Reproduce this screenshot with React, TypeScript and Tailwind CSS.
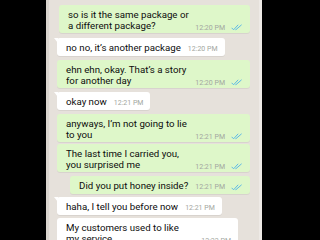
type Msg = {
  out: boolean;
  lines: string[];
  time: string;
  gap: string;
  width: string;
  tail?: boolean;
};

const messages: Msg[] = [
  { out: true, lines: ["so is it the same package or", "a different package?"], time: "12:20 PM", gap: "mt-[5px]", width: "w-[191px]" },
  { out: false, lines: ["no no, it\u2019s another package"], time: "12:20 PM", gap: "mt-[5px]", width: "", tail: true },
  { out: true, lines: ["ehn ehn, okay. That\u2019s a story", "for another day"], time: "12:20 PM", gap: "mt-[4px]", width: "w-[193px]" },
  { out: false, lines: ["okay now"], time: "12:21 PM", gap: "mt-[4px]", width: "", tail: true },
  { out: true, lines: ["anyways, I\u2019m not going to lie", "to you"], time: "12:21 PM", gap: "mt-[4px]", width: "w-[193px]" },
  { out: true, lines: ["The last time I carried you,", "you surprised me"], time: "12:21 PM", gap: "mt-[2px]", width: "w-[193px]" },
  { out: true, lines: ["Did you put honey inside?"], time: "12:21 PM", gap: "mt-[4px]", width: "" },
  { out: false, lines: ["haha, I tell you before now"], time: "12:21 PM", gap: "mt-[3px]", width: "", tail: true },
  { out: false, lines: ["My customers used to like", "my service"], time: "12:22 PM", gap: "mt-[3px]", width: "w-[181px]" },
];

function Ticks() {
  return (
    <svg width="12" height="7" viewBox="0 0 12 7" className="ml-[6px] shrink-0">
      <path d="M0.6 3.8 L2.6 5.8 L7.2 0.8" fill="none" stroke="#5cb9e6" strokeWidth="1" />
      <path d="M4.4 5.4 L4.8 5.8 L10.6 0.8" fill="none" stroke="#5cb9e6" strokeWidth="1" />
    </svg>
  );
}

function Stamp({ m }: { m: Msg }) {
  return (
    <span className="ml-[7px] flex shrink-0 items-center translate-y-[2px] text-[7px] leading-[8px] text-[#a2a6a0]">
      {m.time}
      {m.out && <Ticks />}
    </span>
  );
}

function Bubble({ m }: { m: Msg }) {
  const last = m.lines[m.lines.length - 1];
  const multi = m.lines.length > 1;
  return (
    <div className={`flex ${m.out ? "justify-end" : "justify-start"} ${m.gap}`}>
      <div
        className={`relative ${m.out ? "bg-[#def7c9]" : "bg-white"} ${m.width} ${multi ? "pb-[1.5px]" : "pb-[3px]"} rounded-[3px] pl-[9px] pr-[7px] pt-[3.5px] text-[9.7px] leading-[11.5px] text-[#0c0c0c] shadow-[0_1px_0_rgba(0,0,0,0.06)]`}
      >
        {m.tail && (
          <svg width="4" height="5" viewBox="0 0 4 5" className="absolute -left-[3px] top-0">
            <path d="M0 0 H4 V5 Z" fill="#ffffff" />
          </svg>
        )}
        {m.lines.slice(0, -1).map((l) => (
          <div key={l} className="whitespace-nowrap">{l}</div>
        ))}
        <div className="flex items-center justify-between whitespace-nowrap">
          <span>{last}</span>
          <Stamp m={m} />
        </div>
      </div>
    </div>
  );
}

export default function App() {
  return (
    <main className="flex h-[240px] w-[320px] overflow-hidden bg-black" style={{ fontFamily: "Roboto, 'Liberation Sans', sans-serif" }}>
      <div className="ml-[46px] flex h-full w-[216px] shrink-0 bg-[#e6e1db]">
        <div className="h-full w-[3px] shrink-0 bg-[#d9d4ce]" />
        <div className="flex min-w-0 flex-1 flex-col pl-[8px] pr-[9px]">
          {messages.map((m, i) => (
            <Bubble key={i} m={m} />
          ))}
        </div>
        <div className="h-full w-[3px] shrink-0 bg-[#eeeae6]" />
      </div>
    </main>
  );
}
